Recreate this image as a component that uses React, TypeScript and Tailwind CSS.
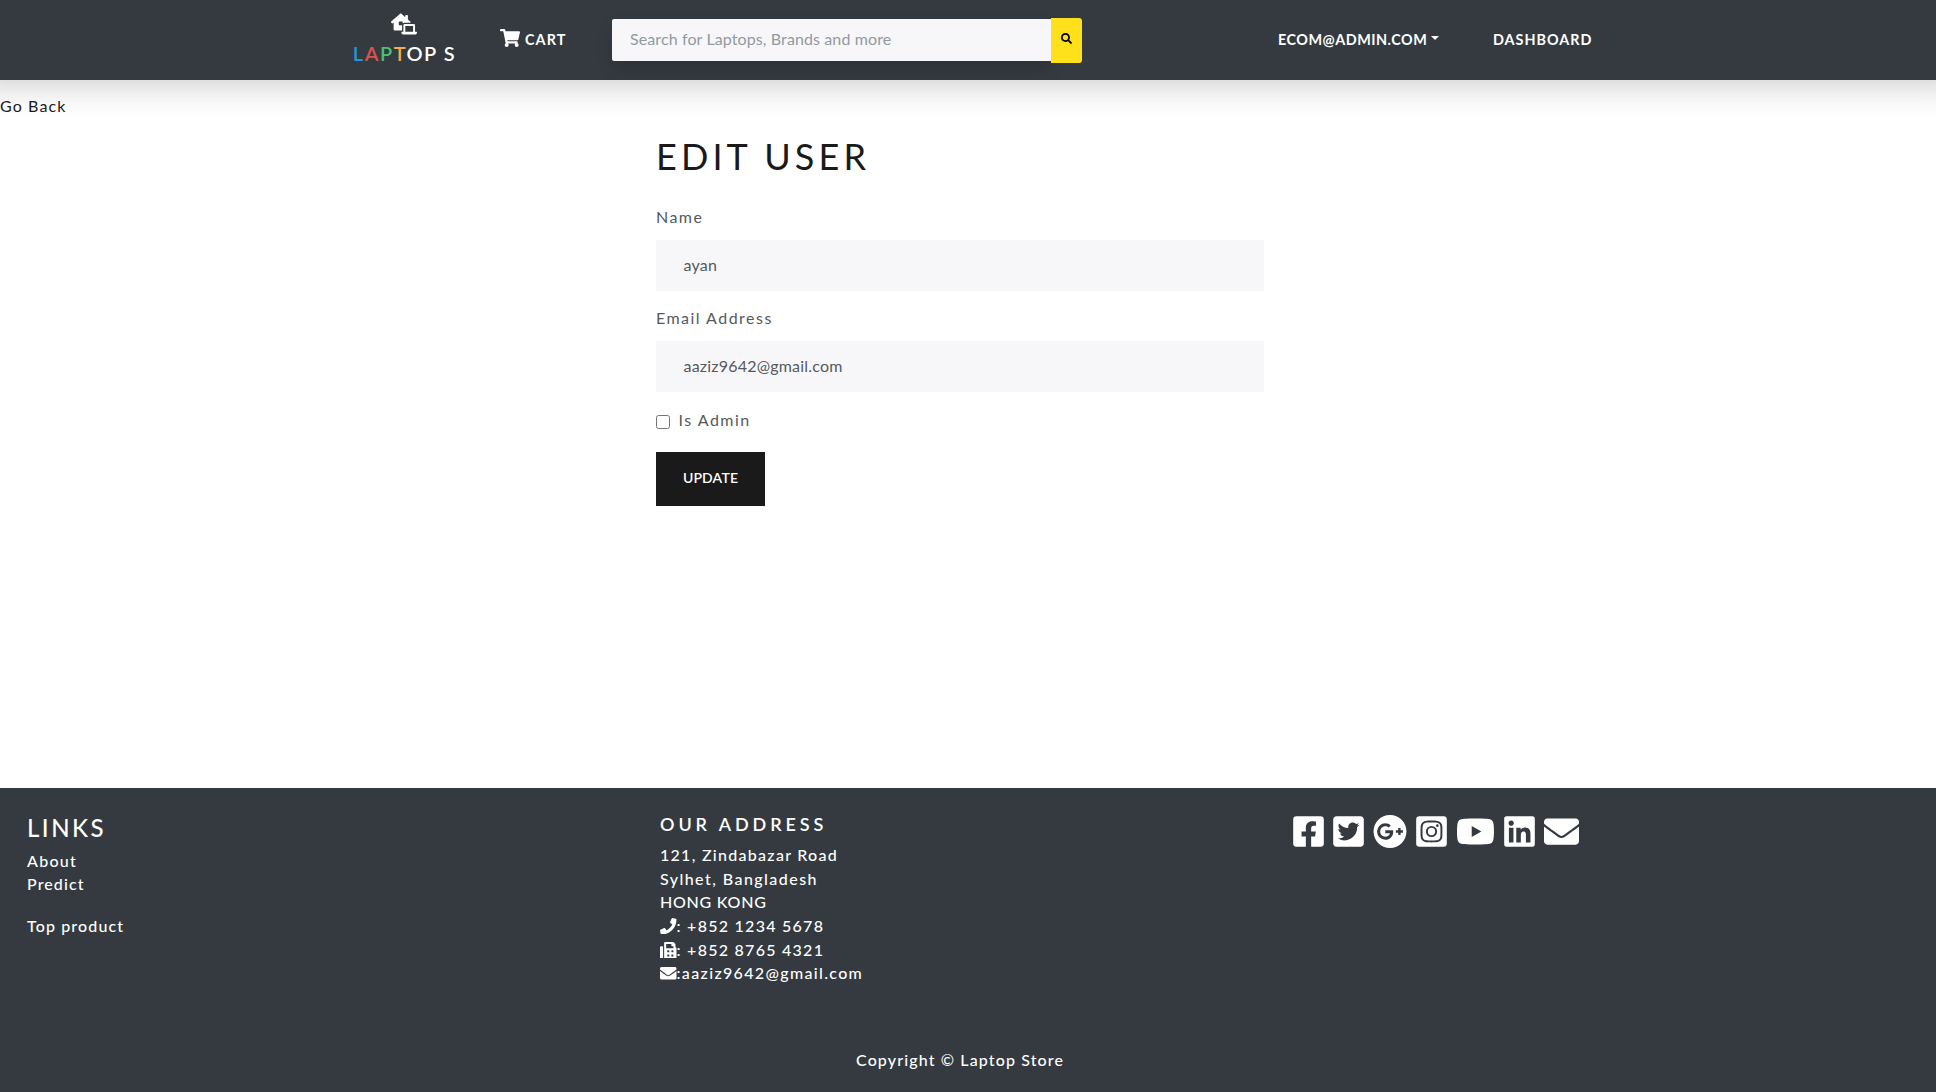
import type { ReactNode } from "react";
import {
  FaEnvelope,
  FaFacebookSquare,
  FaFax,
  FaGooglePlus,
  FaInstagramSquare,
  FaLaptopHouse,
  FaLinkedin,
  FaPhone,
  FaSearch,
  FaShoppingCart,
  FaTwitterSquare,
  FaYoutube,
} from "react-icons/fa";

function Header() {
  return (
    <header className="relative -mx-6 flex h-20 bg-[#343a40] pl-[377px] font-semibold text-white shadow-[0_8px_32px_rgba(0,0,0,0.18)]">
      <a className="flex w-[103px] flex-col items-center pt-[13px]">
        <FaLaptopHouse className="mr-[2px] h-[22px] w-[26px]" />
        <span className="mt-[4px] text-[20px] leading-7 tracking-[1.5px] whitespace-nowrap">
          <span className="text-[#2196d8]">L</span>
          <span className="text-[#d9534f]">A</span>
          <span className="text-[#4bbf73]">P</span>
          <span className="text-[#f0ad4e]">T</span>OP S
        </span>
      </a>
      <a className="ml-[44px] flex h-20 w-[112px] text-[14.4px] font-bold tracking-[1.1px]">
        <FaShoppingCart className="mt-[29px] h-[18px] w-5" />
        <span className="mt-[28px] ml-[5px] leading-6">CART</span>
      </a>
      <form className="flex">
        <div className="mt-[19px] h-[42px] w-[439px] rounded-l-xs bg-[#f7f7f9] pl-[18px] text-base leading-[40px] font-normal tracking-[0.11px] text-[#919aa1] shadow-[0_8px_16px_rgba(0,0,0,0.15)]">
          Search for Laptops, Brands and more
        </div>
        <button type="button" className="relative mt-[18px] flex h-[45px] w-[31px] justify-center rounded-r-[3px] bg-[#ffe11b] pt-[15px] text-black">
          <FaSearch className="size-[11px]" />
        </button>
      </form>
      <nav className="ml-[196px] flex pt-[28px] text-[14.4px] leading-6 font-bold">
        <a className="flex w-[215px] tracking-[0.5px]">
          ECOM@ADMIN.COM
          <span className="mt-[8px] ml-1 h-0 border-x-4 border-t-4 border-x-transparent border-t-white" />
        </a>
        <a className="tracking-[0.98px]">DASHBOARD</a>
      </nav>
    </header>
  );
}

function Field({ label, value }: { label: string; value: ReactNode }) {
  return (
    <div>
      <div className="leading-6 tracking-[1.47px]">{label}</div>
      <div className="mt-[11px] h-[51px] bg-[#f7f7f9] pl-[27.5px] leading-[49px] tracking-[0.2px]">{value}</div>
    </div>
  );
}

function EditForm() {
  return (
    <form className="ml-[656px] w-[608px] text-[#55595c]">
      <h1 className="pt-[16px] text-[36px] leading-[44px] tracking-[4.12px] text-[#1a1a1a]">EDIT USER</h1>
      <div className="mt-[27px] flex flex-col gap-[15px]">
        <Field label="Name" value="ayan" />
        <Field label="Email Address" value="aaziz9642@gmail.com" />
      </div>
      <label className="mt-4 flex items-start">
        <span className="mt-[7px] size-[13.5px] rounded-[2.5px] border border-[#767676] bg-white" />
        <span className="ml-[9px] leading-6 tracking-[1.5px]">Is Admin</span>
      </label>
      <button type="button" className="mt-5 block h-[54px] w-[109px] bg-[#1a1a1a] pb-[2px] text-sm font-semibold tracking-[0.16px] text-white">
        UPDATE
      </button>
    </form>
  );
}

const socialIcons = [
  { name: "Facebook", Icon: FaFacebookSquare, size: "w-[31px] h-[35px]", gap: "" },
  { name: "Twitter", Icon: FaTwitterSquare, size: "w-[31px] h-[35px]", gap: "ml-[9px]" },
  { name: "Google Plus", Icon: FaGooglePlus, size: "w-[34px] h-[35px]", gap: "ml-[9px]" },
  { name: "Instagram", Icon: FaInstagramSquare, size: "w-[31px] h-[35px]", gap: "ml-[9px]" },
  { name: "YouTube", Icon: FaYoutube, size: "w-[39px] h-[35px]", gap: "ml-[9px]" },
  { name: "LinkedIn", Icon: FaLinkedin, size: "w-[31px] h-[35px]", gap: "ml-[9px]" },
  { name: "Email", Icon: FaEnvelope, size: "w-[35px] h-[35px]", gap: "ml-[9px]" },
];

function Footer() {
  return (
    <footer className="flex h-[304px] flex-col bg-[#343a40] pl-[27px] leading-6 font-medium text-white">
      <div className="flex h-[260px]">
        <section className="w-[633px] pt-[24px]">
          <h3 className="text-2xl leading-8 tracking-[2.5px]">LINKS</h3>
          <div className="mt-[5px] leading-[23px] tracking-[1.3px]">About</div>
          <div className="leading-[23px] tracking-[1.1px]">Predict</div>
          <div className="mt-[19px] leading-[23px] tracking-[1.13px]">Top product</div>
        </section>
        <section className="w-[633px] pt-[24px]">
          <h5 className="text-lg leading-6 font-semibold tracking-[3.9px]">OUR ADDRESS</h5>
          <address className="mt-[7px] leading-[23.65px] not-italic">
            <div className="tracking-[1.28px]">121, Zindabazar Road</div>
            <div className="tracking-[1.44px]">Sylhet, Bangladesh</div>
            <div className="tracking-[0.75px]">HONG KONG</div>
            <div className="flex tracking-[1.26px]">
              <FaPhone className="mt-[4px] size-[16.5px]" />: +852 1234 5678
            </div>
            <div className="flex tracking-[1.26px]">
              <FaFax className="mt-[4px] size-[16.5px]" />: +852 8765 4321
            </div>
            <div className="flex tracking-[1.34px]">
              <FaEnvelope className="mt-[4px] size-[16.5px]" />:aaziz9642@gmail.com
            </div>
          </address>
        </section>
        <section className="flex items-start pt-[26px]">
          {socialIcons.map(({ name, Icon, size, gap }) => (
            <a key={name} className={gap}>
              <Icon className={size} />
            </a>
          ))}
        </section>
      </div>
      <div className="ml-[829px] tracking-[1.13px]">Copyright © Laptop Store</div>
    </footer>
  );
}

export default function App() {
  return (
    <div className="flex h-[1092px] flex-col overflow-hidden bg-white font-['Lato',sans-serif] text-base">
      <Header />
      <main className="relative flex-1">
        <a className="mt-[14px] block leading-6 tracking-[1.1px] text-[#1a1a1a]">Go Back</a>
        <EditForm />
      </main>
      <Footer />
    </div>
  );
}
